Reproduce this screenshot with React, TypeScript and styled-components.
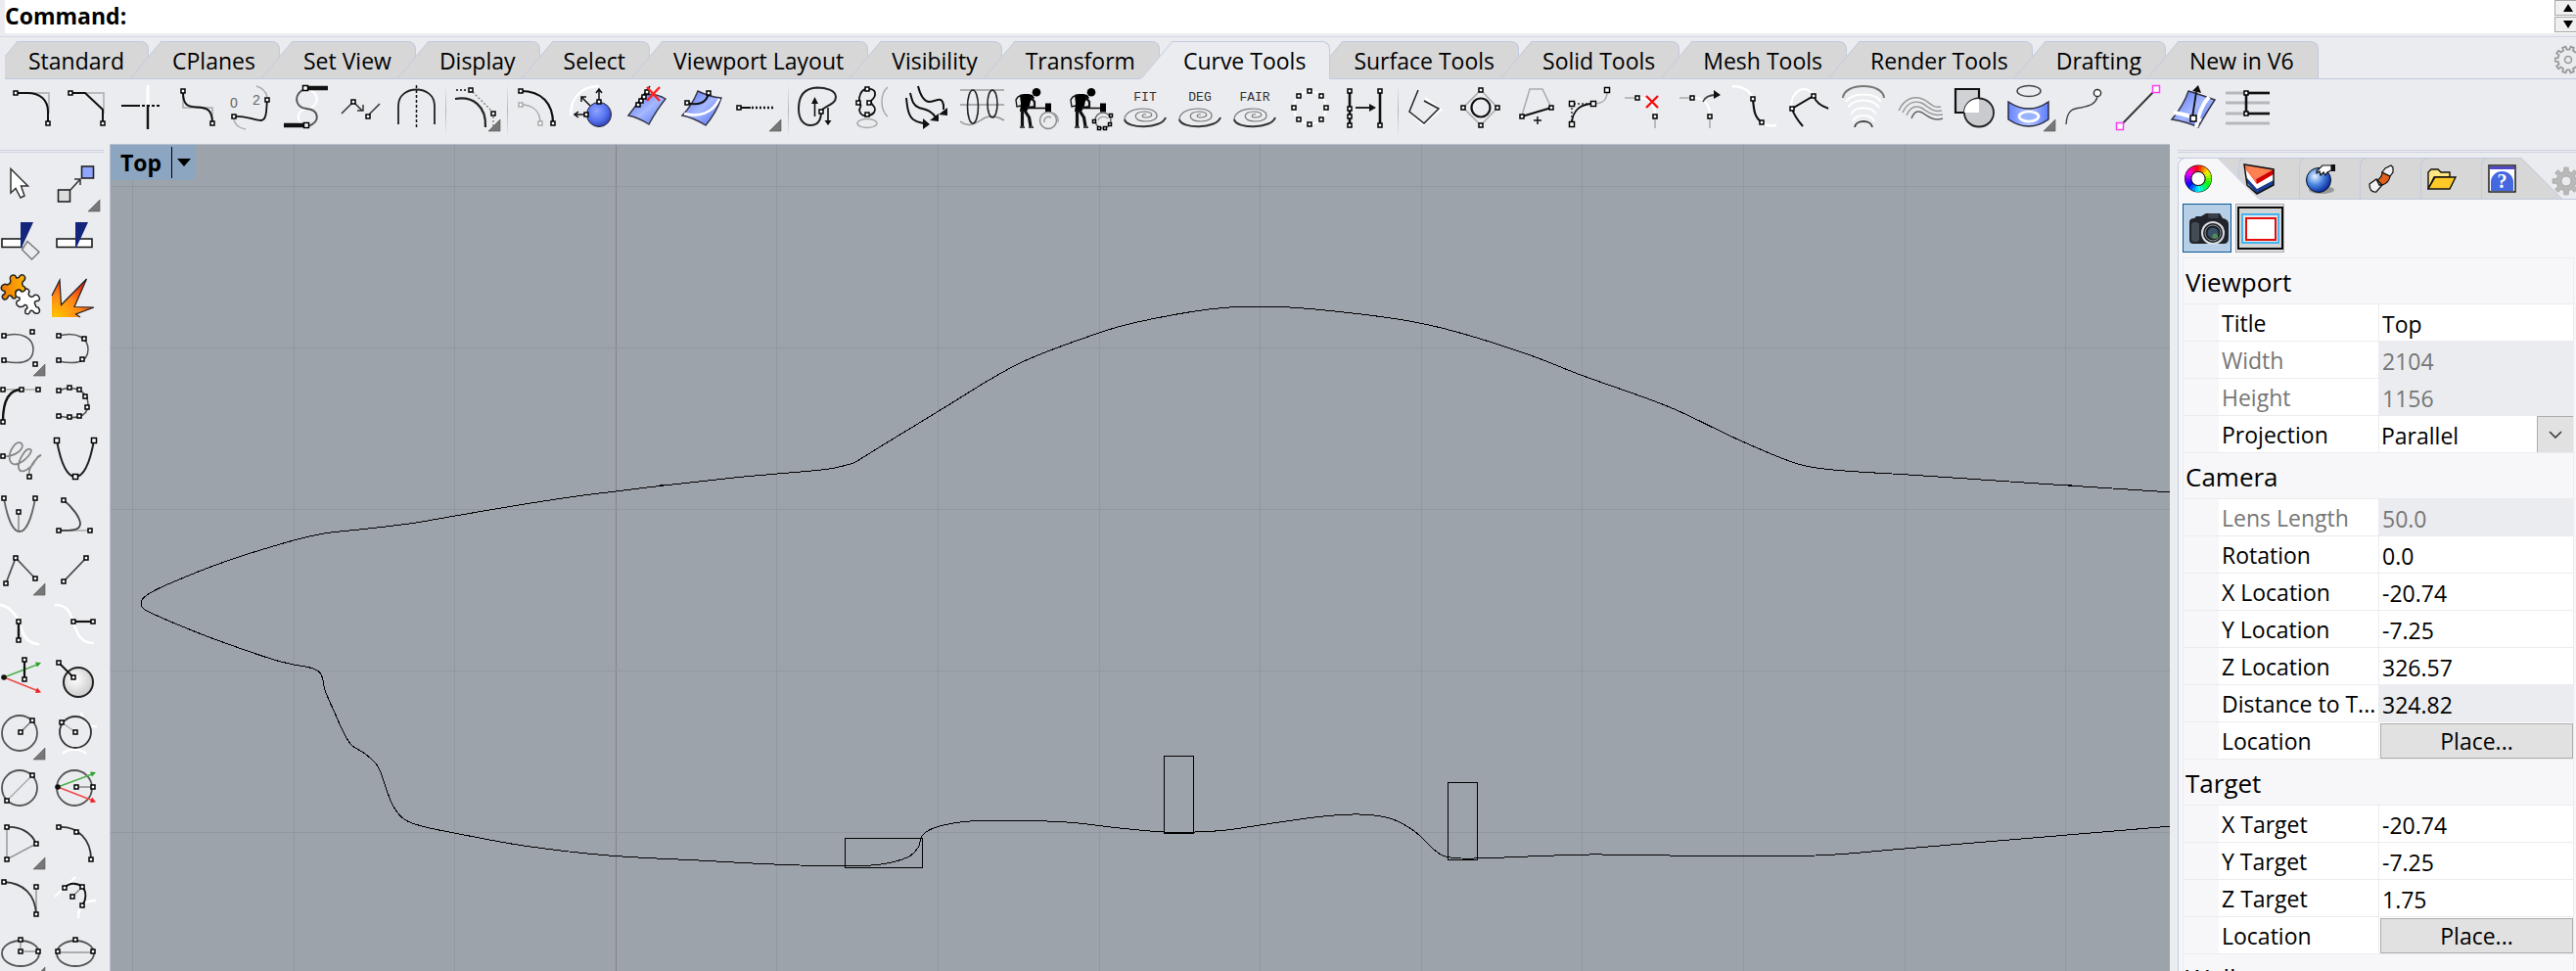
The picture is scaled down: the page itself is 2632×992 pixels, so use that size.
import React from "react";
import styled, { createGlobalStyle, css } from "styled-components";

const color = {
  chrome: "#ebecf0",
  line: "#c2cade",
  tab: "#d7d7d7",
  panel: "#f7f7f9",
  button: "#e1e1e1",
  buttonLine: "#adadad",
  canvas: "#9da3ab",
  grid: "#9298a0",
  axis: "#81858d",
};

const GlobalStyle = createGlobalStyle`
  *, *::before, *::after { box-sizing: border-box; }
  body {
    margin: 0;
    background: ${color.chrome};
    color: #000;
    font-family: "Open Sans", "Noto Sans", sans-serif;
    font-size: 23px;
    line-height: 30px;
  }
  button, input, select { font: inherit; color: inherit; margin: 0; padding: 0; border: 0; background: none; border-radius: 0; }
`;

/* ---------- shell ---------- */

const Shell = styled.div`
  display: flex;
  flex-direction: column;
  height: 100vh;
  overflow: hidden;
`;

const CommandBar = styled.div`
  display: flex;
  height: 34px;
  margin-left: 5px;
  background: #fff;
`;

const CommandLabel = styled.label`
  padding-top: 1px;
  font-weight: 700;
`;

const CommandInput = styled.input`
  flex: 1;
  min-width: 0;
  outline: none;
`;

const Spinner = styled.div`
  display: flex;
  flex-direction: column;
  gap: 1px;
  width: 22px;
`;

const SpinButton = styled.button`
  display: flex;
  align-items: center;
  justify-content: center;
  height: 16px;
  padding-left: 5px;
  border: 1px solid #a8a8a8;
  border-right: 0;
  background: #f0f0f0;
`;

const TabBar = styled.div`
  display: flex;
  justify-content: space-between;
  margin-top: 3px;
  padding: 4px 0 0 5px;
  border-top: 1px solid #d4d8e4;
`;

const Tabs = styled.div`
  display: flex;
  flex: 1;
  min-width: 0;
  height: 39px;
  overflow: hidden;
  box-shadow: inset 0 -1px 0 ${color.line};
`;

const Tab = styled.button<{ $active?: boolean }>`
  position: relative;
  flex: none;
  height: 39px;
  padding: 0 25px 0 24px;
  z-index: ${(p) => (p.$active ? 2 : 1)};
  white-space: nowrap;

  &::before,
  &::after {
    content: "";
    position: absolute;
    z-index: -1;
    top: 0;
    bottom: 0;
    background: ${(p) => (p.$active ? color.chrome : color.tab)};
    border: 1px solid ${color.line};
    border-bottom-color: ${(p) => (p.$active ? color.chrome : color.line)};
  }
  &::before {
    left: -20px;
    width: 44px;
    border-right: 0;
    transform: skewX(-40deg);
    transform-origin: bottom;
  }
  &::after {
    left: 22px;
    right: 0;
    border-left: 0;
    border-top-right-radius: 8px;
  }
`;

const GearSlot = styled.button`
  width: 22px;
  height: 39px;
  overflow: hidden;
  box-shadow: inset 0 -1px 0 ${color.line};
`;

const Toolbar = styled.div`
  display: flex;
  height: 66px;
  padding: 5px 0 0 4px;
`;

const Tool = styled.button`
  flex: none;
  width: 56px;
  height: 48px;
  padding: 0 4px;
`;

const Divider = styled.span`
  flex: none;
  width: 1px;
  height: 54px;
  margin: 0 3px;
  background: linear-gradient(${color.chrome}, #b4b6bc, ${color.chrome});
`;

const Glyph = styled.svg`
  display: block;
  overflow: visible;
`;

const Main = styled.main`
  display: flex;
  flex: 1;
  min-height: 0;
`;

/* ---------- palette ---------- */

const Palette = styled.aside`
  flex: none;
  width: 112px;
  overflow: hidden;
`;

const Grip = styled.div`
  height: 3px;
  margin-top: 6px;
  border: solid #cdd3e0;
  border-width: 1px 0;
`;

const PaletteGrip = styled(Grip)`
  width: 106px;
`;

const PaletteGrid = styled.div`
  display: grid;
  grid-template-columns: 48px 48px;
  gap: 8px;
  margin: 12px 0 0 -2px;
`;

const PaletteTool = styled.button`
  width: 48px;
  height: 48px;
`;

/* ---------- drawing area ---------- */

const Viewport = styled.section`
  position: relative;
  flex: 1;
  min-width: 0;
  overflow: hidden;
  border: solid #b9bfce;
  border-width: 1px 0 0 1px;
  background: ${color.canvas};
`;

const Canvas = styled.svg`
  display: block;
  width: 100%;
  height: 100%;
`;

const ViewportTitle = styled.button`
  position: absolute;
  top: 0;
  left: 0;
  display: flex;
  align-items: center;
  gap: 10px;
  height: 36px;
  padding: 0 5px 0 10px;
  border-radius: 0 0 5px 0;
  background: #8ca5c1;
  font-weight: 700;
`;

const TitleRule = styled.span`
  width: 1px;
  height: 32px;
  margin-right: -5px;
  background: #000;
`;

/* ---------- properties ---------- */

const Panel = styled.aside`
  display: flex;
  flex-direction: column;
  flex: none;
  width: 407px;
  margin-left: 8px;
  overflow: hidden;
`;

const PanelTabs = styled.div`
  position: relative;
  display: flex;
  flex: none;
  height: 43px;
  margin-top: 5px;
  overflow: hidden;
  box-shadow: inset 0 -1px 0 ${color.line};
`;

const PanelTab = styled.button<{ $active?: boolean }>`
  position: relative;
  flex: none;
  width: 62px;
  height: 43px;
  padding: 0 0 0 5px;
  z-index: ${(p) => (p.$active ? 2 : 1)};

  &::before,
  &::after {
    content: "";
    position: absolute;
    z-index: -1;
    top: 0;
    bottom: 0;
    background: ${(p) => (p.$active ? color.panel : color.tab)};
    border: 1px solid ${color.line};
    border-bottom-color: ${(p) => (p.$active ? color.panel : color.line)};
  }
  &::before {
    left: 20px;
    width: 64px;
    border-left: 0;
    transform: skewX(45deg);
    transform-origin: bottom;
  }
  &::after {
    left: 0;
    width: 24px;
    border-right: 0;
    border-top-left-radius: 8px;
  }
`;

const PanelGear = styled.button`
  position: relative;
  z-index: 3;
  flex: none;
  width: 40px;
  padding-left: 8px;
`;

const PanelBody = styled.div`
  flex: 1;
  min-height: 0;
  padding: 4px 2px 0 4px;
  overflow: hidden;
  border-left: 1px solid ${color.line};
  background: ${color.panel};
`;

const PageButtons = styled.div`
  display: flex;
  gap: 4px;
  margin-bottom: 5px;
`;

const PageButton = styled.button<{ $active?: boolean }>`
  width: 50px;
  height: 50px;
  border: 1px solid ${(p) => (p.$active ? "#0a5796" : "#adadad")};
  background: ${(p) => (p.$active ? "#b6cfe7" : "#dedfe0")};
`;

const Sheet = styled.form`
  border: solid ${color.chrome};
  border-width: 1px 1px 0;
`;

const Heading = styled.h2`
  height: 47px;
  margin: 0;
  padding: 4px 2px 0;
  border-bottom: 1px solid ${color.chrome};
  font-size: 26px;
  font-weight: 400;
  line-height: 40px;
`;

const Row = styled.div`
  display: grid;
  grid-template-columns: 36px 164px 1fr;
  height: 38px;
`;

const cell = css`
  min-width: 0;
  border-bottom: 1px solid ${color.chrome};
  background: #fff;
`;

const Gutter = styled.span`
  ${cell}
  background: ${color.panel};
`;

const Label = styled.label<{ $dim?: boolean }>`
  ${cell}
  padding: 4px 0 0 3px;
  border-right: 1px solid ${color.chrome};
  overflow: hidden;
  color: ${(p) => (p.$dim ? "#767676" : "#000")};
  text-overflow: ellipsis;
  white-space: nowrap;
`;

const Value = styled.input<{ $dim?: boolean }>`
  ${cell}
  width: 100%;
  height: 38px;
  padding: 2px 0 0 3px;
  outline: none;
  color: ${(p) => (p.$dim ? "#767676" : "#000")};
  &:read-only { background: ${color.chrome}; }
`;

const SelectCell = styled.div`
  ${cell}
  display: grid;
  grid-template-columns: 1fr 37px;
`;

const Select = styled.select`
  grid-area: 1 / 1 / 2 / 3;
  height: 37px;
  padding: 2px 37px 0 2px;
  appearance: none;
  outline: none;
`;

const Chevron = styled.span`
  display: flex;
  grid-area: 1 / 2;
  align-items: center;
  justify-content: center;
  border: solid ${color.buttonLine};
  border-width: 1px 0 0 1px;
  background: ${color.button};
  pointer-events: none;
`;

const ButtonCell = styled.div`
  ${cell}
  padding: 1px 0 0 1px;
`;

const PlaceButton = styled.button`
  display: block;
  width: 100%;
  height: 36px;
  border: 1px solid ${color.buttonLine};
  background: ${color.button};
`;

/* ---------- icon parts ---------- */

type Pt = [number, number];

const Nodes = ({ at, c = "#000", s = 4 }: { at: Pt[]; c?: string; s?: number }) => (
  <>
    {at.map(([x, y]) => (
      <rect key={`${x},${y}`} x={x - s / 2} y={y - s / 2} width={s} height={s} fill="#fff" stroke={c} strokeWidth={1.5} />
    ))}
  </>
);

const P = ({ d, c = "#111", w = 1.5, f = "none", dash }: { d: string; c?: string; w?: number; f?: string; dash?: string }) => (
  <path d={d} stroke={c} strokeWidth={w} fill={f} strokeDasharray={dash} />
);

const Flyout = () => <path d="M48 36V48H36Z" fill="#777" stroke="#555" strokeWidth={0.6} />;

const Head = ({ d, c = "#111" }: { d: string; c?: string }) => <path d={d} fill={c} />;

const Spiral = ({ word }: { word: string }) => (
  <>
    <text x={21} y={17} textAnchor="middle" fontFamily="Liberation Mono, monospace" fontSize={13} fill="#333">
      {word}
    </text>
    <P c="#777" w={1.2} d="M22 31C18 30 16 34 22 34C30 34 30 28 20 28C8 28 8 38 22 38C38 38 36 25 20 25C4 25 0 32 0 36" />
    <P c="#333" w={2} d="M0 36C2 46 38 46 42 34" />
  </>
);

const Painter = ({ points }: { points?: boolean }) => (
  <>
    <circle cx={22} cy={8.3} r={4.3} />
    <path d="M5 11L9 10H14L18 11L20 14L16 17L15 22L13 26L12 28H5L6 20Z" />
    <P w={1.4} d="M7 11L3 13L1 16L2 23L6 22" />
    <P w={2.2} d="M16 13L20 18V23L12 24" />
    <P w={1.6} d="M11 24.500H32" />
    <P w={3.2} d="M7.500 26V43M10 27L14.500 34L16 43" />
    <P w={1.4} d="M5 44H10M14 44H19" />
    <rect x={31} y={19.5} width={6} height={9} />
    {points ? (
      <>
        <circle cx={34} cy={37} r={8} fill="none" stroke="#666" strokeWidth={1.4} />
        <P c="#999" w={1.2} d="M29 37C30 33 36 32 39 35" />
        <Nodes s={3} at={[[25, 38], [42, 32], [41, 41], [30, 45], [36, 45]]} />
      </>
    ) : (
      <>
        <circle cx={34} cy={37} r={8.5} fill="none" stroke="#888" strokeWidth={1.4} />
        <P c="#999" w={1.4} d="M37 29C42 30 45 34 44 39M30 39C29 35 33 32 37 34" />
      </>
    )}
  </>
);

const TriadArrows = ({ x, y }: { x: number; y: number }) => (
  <>
    <P c="#4cb04c" d={`M${x} ${y}L40 7`} />
    <Head c="#2ca02c" d="M44 5L38 4.5L40 9.5Z" />
    <P c="#f04848" d={`M${x} ${y}L40 33.5`} />
    <Head c="#f02020" d="M44 35.5L38 36L40 30.5Z" />
    <circle cx={x} cy={y} r={2.8} fill="#111" />
  </>
);

const cog = (cx: number, cy: number, outer: number, inner: number, teeth: number) => {
  const step = (Math.PI * 2) / teeth;
  const spot = (r: number, a: number) => `${(cx + r * Math.cos(a)).toFixed(2)} ${(cy + r * Math.sin(a)).toFixed(2)}`;
  return (
    Array.from({ length: teeth }, (_, i) => {
      const a = i * step;
      return `${i ? "L" : "M"}${spot(inner, a - step * 0.28)}L${spot(outer, a - step * 0.2)}L${spot(outer, a + step * 0.2)}L${spot(inner, a + step * 0.28)}`;
    }).join("") + "Z"
  );
};

/* ---------- toolbar icons ---------- */

type Icon = { name: string; art: React.ReactNode };

const curveTools: Icon[][] = [
  [
    { name: "Fillet curves", art: (<><P c="#aaa" d="M8 9H42V30" /><P w={2} d="M8 9H20C33 9 41 16 41 28V40" /><Nodes at={[[8, 9], [41, 40]]} /></>) },
    { name: "Chamfer curves", art: (<><P c="#aaa" d="M8 9H42V30" /><P w={2} d="M8 9H23L41 26V40" /><Nodes at={[[8, 9], [41, 40]]} /></>) },
    { name: "Connect curves", art: (<><P c="#fff" w={3} d="M31 1V20" /><P w={2} d="M4 22H20" /><P w={2} dash="3 2" d="M20 22H44" /><P w={2.4} d="M31 21V46" /></>) },
    { name: "Blend curves", art: (<><P c="#aaa" d="M11 10V24H41V36" /><P w={2} d="M11 8C11 22 16 23 25 23.500C36 24 41 26 41 40" /><Nodes at={[[11, 7], [41, 40]]} /></>) },
    {
      name: "Blend curves with options",
      art: (
        <>
          <P c="#aaa" d="M30 2C37 4 40 9 41 13M7 36C8 42 13 45 19 46" />
          <P w={1.8} d="M7 33C20 32 28 37 35 37C41 36 40 25 41 16" />
          <text x={3} y={24} fontFamily="Liberation Sans, sans-serif" fontSize={14} fill="#666">0</text>
          <text x={26} y={21} fontFamily="Liberation Sans, sans-serif" fontSize={14} fill="#666">2</text>
          <Nodes at={[[7, 33], [41, 16]]} />
        </>
      ),
    },
    { name: "Arc blend", art: (<><P c="#fff" w={2} d="M26 5C40 8 38 24 26 25S14 40 25 43" /><P c="#555" w={2} d="M24 5C12 8 12 24 25 25S40 38 27 43" /><P w={4.500} d="M26 4H47M2 42H24" /><Nodes s={5} at={[[24, 4], [25, 42]]} /></>) },
    { name: "Match curve", art: (<><P c="#333" d="M5 30L17 18L26 27M32 32L44 20M21 27H27V21" /><Nodes at={[[17, 18], [32, 33]]} /></>) },
    { name: "Symmetry", art: (<><P c="#222" w={1.800} d="M7 41V22C7 0 44 0 44 22V41" /><P dash="3 2" d="M25.500 1V46" /></>) },
  ],
  [
    { name: "Extend curve", art: (<><P dash="2 2" d="M3 6H14" /><P c="#888" dash="2 2" d="M20 8L40 28M41 33V46" /><P c="#222" w={2.200} d="M2 15C20 12 34 22 33 44" /><Nodes at={[[18, 6], [41, 30]]} /><Flyout /></>) },
  ],
  [
    { name: "Offset curve", art: (<><P c="#aaa" d="M6 21C19 21 26 28 26 40" /><P w={2.200} d="M6 7C28 7 39 20 39 40" /><Nodes c="#aaa" at={[[6, 21], [26, 40]]} /><Nodes at={[[6, 7], [39, 40]]} /></>) },
    {
      name: "Offset on surface",
      art: (<><P c="#fff" w={2.400} d="M1 32C1 12 14 2 30 2" /><circle cx={30} cy={31} r={12.500} fill="url(#ball)" stroke="#223" /><P d="M30 16V6M27 9L30 5L33 9M15 31H5M9 28L5 31L9 34M21 22L12 13M12 18V13H17" /><Nodes at={[[30, 18], [17, 31]]} /></>),
    },
    {
      name: "Delete offset",
      art: (<><path d="M4 32L19 12Q30 8 42 15Q33 26 25 41Q14 34 4 32Z" fill="url(#sheet)" stroke="#334" strokeWidth={1.400} /><P d="M12 22L26 2" /><Nodes at={[[14, 21], [17, 17], [20, 13], [23, 8]]} /><P c="#f22" w={2.400} d="M23 3L36 17M36 3L23 17" /></>),
    },
    {
      name: "Blend on surface",
      art: (<><path d="M19 7Q31 13 43 14Q38 29 27 42Q14 34 3 32Q13 22 19 7Z" fill="url(#sheet)" stroke="#334" strokeWidth={1.400} /><P c="#fff" w={2.600} d="M5 30C20 34 34 30 41 15" /><P d="M8 19C18 22 28 20 30 9" w={2} /><Nodes at={[[30, 9], [8, 19]]} /></>),
    },
    { name: "Extend", art: (<><P w={2} d="M5 24H17" /><P w={2.600} dash="2 2" d="M18 24H40" /><Nodes at={[[5, 24]]} /><Flyout /></>) },
  ],
  [
    {
      name: "Adjust seam",
      art: (<><P c="#222" w={2} d="M26 28C27 22 41 22 41 13C41 6 30 3.500 22 3.500C9 4 3 12 3 25C3 36 8 42 15 42C24 42 26 35 26 28" /><P w={1.600} d="M19.500 33V17M33 24V38" /><Head d="M19.500 13L16 20H23ZM33 42L29.500 37H36.500Z" /><Nodes at={[[26, 28]]} /></>),
    },
    {
      name: "Edit curve on surface",
      art: (<><P c="#aaa" d="M38 3C30 10 30 26 38 33" /><ellipse cx={17} cy={40} rx={10} ry={4.500} fill="none" stroke="#aaa" strokeWidth={1.500} /><P w={1.800} d="M17 5C27 4 27 12 21 17C20 22 28 22 24 29C19 34 10 34 9 26C13 20 8 20 9 14C10 8 13 5 17 5Z" /><Nodes at={[[17, 5], [8, 19], [19, 19], [17, 31]]} /></>),
    },
    {
      name: "Curve direction",
      art: (<><P w={2} d="M13 2C15 10 18 17 24 18C30 18 36 13 38 18C40 22 39 24 39 26M5 9C7 17 8 22 14 24C20 26 26 26 31 34M1 14C2 24 3 32 8 36C12 39 15 39 19 40" /><Head d="M43 24V32L34 31ZM34 30V38L25 37ZM18 35L25 41L18 46Z" /></>),
    },
    {
      name: "Cross sections",
      art: (<><P c="#999" d="M0 6H45M0 21H45M0 38C10 46 18 38 26 34C34 31 40 34 45 37" /><ellipse cx={13} cy={23} rx={5.500} ry={17} fill="none" stroke="#222" strokeWidth={1.600} /><ellipse cx={33} cy={20} rx={5} ry={14} fill="none" stroke="#222" strokeWidth={1.600} /></>),
    },
    { name: "Rebuild curve", art: <Painter /> },
    { name: "Rebuild with points", art: <Painter points /> },
    { name: "Fit curve", art: <Spiral word="FIT" /> },
    { name: "Change degree", art: <Spiral word="DEG" /> },
    { name: "Fair curve", art: <Spiral word="FAIR" /> },
    { name: "Make periodic", art: (<><circle cx={21.500} cy={24} r={16.500} fill="none" stroke="#fff" strokeWidth={2} /><Nodes at={[[21, 7], [33, 12], [38, 24], [33, 36], [21, 41], [10, 36], [5, 24], [10, 12]]} /></>) },
    { name: "Match structure", art: (<><P w={2.600} d="M6 7V42M37 7V42" /><P w={1.800} d="M12 24H28" /><Head d="M33 24L26 20V28Z" /><Nodes at={[[6, 7], [6, 25], [6, 33], [6, 42], [37, 7], [37, 42]]} /></>) },
  ],
  [
    { name: "Close curve", art: (<><P c="#fff" w={2.500} d="M18 41L36 26L20 14M5 29L19 42" /><P c="#222" d="M13 6L4 28L19 40L34 25L19 17" /></>) },
    { name: "Convert curve", art: (<><P c="#aaa" d="M21 6L3 24L21 42L38 24Z" /><circle cx={21} cy={24} r={9.500} fill="none" stroke="#111" strokeWidth={2.200} /><Nodes at={[[21, 6], [3, 24], [38, 24], [21, 42]]} /></>) },
    { name: "Insert line", art: (<><P c="#aaa" d="M7 32L15 5H28L37 24" /><P w={2} d="M7 33L37 24" /><P d="M23 33V41M19 37H27" /><Nodes at={[[7, 33], [37, 24]]} /></>) },
    { name: "Edit Bezier", art: (<><P c="#333" dash="2 2" d="M2 38V20H22" /><P w={1.800} d="M2 41C2 26 12 20 24 20" /><P c="#aaa" d="M26 20C36 19 38 14 38 8" /><Nodes s={5} at={[[2, 20], [24, 20], [38, 6], [2, 41]]} /></>) },
    { name: "Remove corner", art: (<><P c="#aaa" d="M0 14H12M31 34V45" /><P c="#fff" w={2.200} d="M15 14C26 14 31 22 31 31" /><Nodes at={[[13, 14], [31, 33]]} /><P c="#e11" w={2.400} d="M22 12L34 24M34 12L22 24" /></>) },
    { name: "Replace corner", art: (<><P c="#aaa" d="M0 14H12M31 34V45" /><P c="#fff" w={2.200} d="M15 14C26 14 31 22 31 31" /><P c="#444" w={1.800} d="M24 18C26 13 31 11 37 11" /><Head d="M42 11L35 6V15Z" /><Nodes at={[[13, 14], [31, 33]]} /></>) },
    { name: "Sub curve", art: (<><P c="#fff" w={2.600} d="M-2 2C10 2 17 8 19 15M28 39C32 42 38 43 43 42" /><P w={2.200} d="M19 15C20 28 21 34 28 39" /><Nodes at={[[19, 15], [28, 39]]} /></>) },
    { name: "Curve through polyline", art: (<><P c="#fff" w={2.200} d="M2 24C2 6 16 0 24 10" /><P w={2} d="M14 43C8 36 5 32 3 25L25 12C28 20 34 22 40 25" /><Nodes at={[[25, 12], [3, 25]]} /></>) },
    { name: "Tween curves", art: (<><P c="#fff" w={1.800} d="M2 18C8 8 32 8 38 18M4 24C10 14 30 14 36 24M7 31C11 22 29 22 33 31M9 38C13 30 27 30 31 38" /><P c="#777" w={2} d="M-1 14C0 -2 40 -2 41 14" /><P c="#444" w={1.800} d="M11 44C12 36 28 36 29 44" /></>) },
    { name: "Average curves", art: (<><P c="#999" d="M0 27C6 14 16 12 24 15C32 18 34 25 43 23M4 29C9 18 17 17 23 19C31 23 34 29 44 27M8 32C12 22 18 22 23 24C30 28 34 33 45 31" /><P c="#666" d="M13 35C16 27 20 27 24 29C30 33 36 38 45 35" /></>) },
    { name: "Curve boolean", art: (<><path d="M2 5H26V29H2Z" fill="#d0d2d6" stroke="#111" strokeWidth={2.200} /><ellipse cx={26} cy={29} rx={15} ry={14.500} fill="#c9cbcf" stroke="#222" strokeWidth={1.800} /><path d="M26 15V29H11C11 21 17 15 26 15Z" fill="#fff" /></>) },
    {
      name: "Project curve",
      art: (<><ellipse cx={21} cy={7} rx={12} ry={5.500} fill="none" stroke="#444" strokeWidth={1.500} /><path d="M0 18Q21 32 41 18V36Q21 50 0 36Z" fill="url(#tube)" stroke="#223" strokeWidth={1.400} /><ellipse cx={21} cy={33} rx={10} ry={5} fill="#9bb4ff" stroke="#fff" strokeWidth={2.600} /><Flyout /></>),
    },
    { name: "Extract curve", art: (<><P c="#444" w={1.400} d="M3 41C4 26 10 25 18 24C28 22 33 20 35 13" /><circle cx={35} cy={9} r={3.600} fill="#fff" stroke="#333" strokeWidth={1.500} /></>) },
    { name: "Handle curve", art: (<><P c="#333" w={1.800} d="M39 5L2 43" /><Nodes c="#ff3df2" s={7} at={[[39, 5], [2, 43]]} /></>) },
    {
      name: "Curve on surface",
      art: (<><path d="M16 7Q29 11 43 16Q35 28 26 44Q13 38 -1 36Q11 22 16 7Z" fill="url(#sheet)" stroke="#334" strokeWidth={1.400} /><P c="#fff" w={4} d="M1 29Q15 31 29 37M37 13Q27 24 24 44" /><P w={1.800} d="M20 34L24 8" /><Head d="M26 1L29 9L20 7Z" /><Nodes s={6} at={[[21, 35]]} /></>),
    },
    { name: "Connect levels", art: (<><P c="#b5b7bb" w={3} d="M-2 9H43M-2 19H43M-2 30H43M-2 40H43" /><P w={2.600} d="M19 9H43M19 30H43M19 9V30" /><Nodes at={[[19, 9], [19, 30]]} /></>) },
  ],
];

/* ---------- palette icons ---------- */

const paletteTools: Icon[] = [
  { name: "Select", art: <path d="M13 4.500V29L18 24.500L23 34L27 32L23.500 22H30.500Z" fill="#fff" stroke="#333" strokeWidth={1.500} /> },
  {
    name: "Transform",
    art: (<><rect x={5.500} y={26} width={12} height={12} fill="#ddd" stroke="#222" strokeWidth={1.600} /><rect x={29.500} y={2} width={12} height={12} fill="#8fa5ff" stroke="#222" strokeWidth={1.600} /><P c="#333" d="M18 26L28 15M22 15H28V21" /><Flyout /></>),
  },
  { name: "Trim", art: (<><path d="M4 20H24V28.500H4Z" fill="#fff" stroke="#111" strokeWidth={1.500} /><path d="M23 3H36L24 29H23Z" fill="#14267c" /><path d="M30 22.500L42 33.500L34.500 41L24.500 31Z" fill="none" stroke="#777" strokeWidth={1.400} /></>) },
  { name: "Split", art: (<><path d="M4 20H40V28.500H4Z" fill="#fff" stroke="#111" strokeWidth={1.500} /><path d="M23 3H36L24 29H23Z" fill="#14267c" /></>) },
  {
    name: "Join",
    art: (
      <g stroke="#222" strokeWidth={1.500} strokeLinejoin="round">
        <path d="M4 12Q7 9 9 11Q13 10 12.700 7Q11 1 16 1Q18 1 18.700 4Q22 4 22 2Q26 -1 27.700 3.500Q28 6 25 8Q24 12 27 13Q30 17 27 18.500Q24 18 22 16Q18 16 18 18.500Q19 24 17 25Q14 25 14 22.500Q10 21 10 24Q7 28 4.700 24.500Q3 22 7 20Q8 17 5 17Q2 15 4 12Z" fill="url(#amber)" />
        <path d="M18 18.500Q21 14 24 18Q27 18 28 15.500Q31 14 32 18Q30 21 33 23Q36 24 37 21.500Q41 20 42.500 25Q42 28 39 27.500Q36 29 38.500 32Q38 34 41 34Q44 38 41 40Q37 41 36 38Q33 36 32.500 39Q31 42 28 40Q27 36 30 35Q30 31 27 31.500Q26 34 22 33.500Q17 31 19.500 27.500Q23 27 22 24Q17 24 18 18.500Z" fill="#fff" />
      </g>
    ),
  },
  { name: "Explode", art: (<><path d="M-1 22L7 6L8.500 31.500L34.500 5L22 33.500L42 34L23.500 41L28 44H-1Z" fill="url(#fire)" /><P c="#222" w={1.200} d="M-1 22L7 6L8.500 31.500L34.500 5L22 33.500L42 34L23.500 41L28 44" /></>) },
  { name: "Control point curve", art: (<><P c="#555" d="M6 7C25 2 36 10 36 21C36 36 20 36 6 33" /><Nodes at={[[6, 7], [35, 3], [6, 32], [38, 36]]} /><Flyout /></>) },
  { name: "Interpolated curve", art: (<><P c="#555" d="M6 7C25 2 36 10 36 21C36 36 20 36 6 33" /><Nodes at={[[6, 7], [32, 10], [30, 31], [6, 32]]} /></>) },
  { name: "Handle curve", art: (<><P c="#aaa" d="M5 6H41" /><P w={2.400} d="M24 6C12 6 5 16 5 38" /><Nodes at={[[5, 6], [24, 6], [41, 6], [5, 39]]} /></>) },
  { name: "Sketch points", art: (<><P c="#555" d="M6 7C25 0 36 10 36 21C36 36 20 36 6 33" /><Nodes at={[[6, 7], [17, 4], [27, 6], [33, 13], [35, 24], [27, 33], [17, 34], [6, 33]]} /></>) },
  { name: "Helix", art: (<><P c="#888" w={1.800} d="M5 18C18 19 28 10 24 5C18 1 10 14 12 22C16 34 34 18 34 12C30 6 20 22 21 30C23 38 34 30 37 24C40 20 41 17 44 17C38 20 30 32 32 37" /><Nodes at={[[5, 18], [32, 39]]} /></>) },
  { name: "Conic", art: (<><P c="#222" w={2} d="M4 2C8 24 14 39 23 39S38 24 42 2" /><Nodes s={5} at={[[4, 2], [42, 2], [23, 39]]} /></>) },
  { name: "Parabola", art: (<><P c="#888" d="M21 18V39" /><P c="#666" w={1.800} d="M6 5C10 28 16 39 22 39S34 28 38 5" /><Nodes at={[[6, 5], [38, 5], [21, 19]]} /></>) },
  { name: "Conic through point", art: (<><P c="#aaa" d="M6 38H38" /><P c="#444" w={1.800} d="M11 7C20 14 28 25 28 31C28 38 20 38 6 38" /><Nodes at={[[11, 7], [6, 38], [38, 38]]} /></>) },
  { name: "Polyline", art: (<><P c="#555" w={1.800} d="M8 36L18 10L38 31" /><Nodes at={[[18, 10], [8, 36], [38, 31]]} /><Flyout /></>) },
  { name: "Line", art: (<><P c="#444" w={1.800} d="M34 10L11 34" /><Nodes at={[[34, 10], [11, 34]]} /></>) },
  { name: "Line from curve", art: (<><P c="#fff" w={2.600} d="M0 2C10 2 16 8 21 19C26 34 30 42 42 42" /><P w={2.400} d="M21 19V38" /><Nodes at={[[21, 19], [21, 38]]} /></>) },
  { name: "Line normal to curve", art: (<><P c="#fff" w={2.600} d="M2 2C14 2 17 8 21 19C25 34 30 41 42 41" /><P w={2.200} d="M21 19H41" /><Nodes at={[[21, 19], [41, 19]]} /></>) },
  { name: "Vertical line", art: (<><TriadArrows x={6} y={20} /><P w={2.200} d="M27 2V22" /><Nodes at={[[27, 2], [27, 22]]} /></>) },
  { name: "Line normal to surface", art: (<><circle cx={26} cy={25} r={15} fill="url(#pearl)" stroke="#222" strokeWidth={2} /><P w={1.800} d="M6 5L21 20" /><Nodes at={[[6, 5], [21, 20]]} /></>) },
  { name: "Circle", art: (<><circle cx={22} cy={21} r={18} fill="none" stroke="#555" strokeWidth={1.800} /><P c="#777" d="M23 20L35 8" /><Nodes at={[[35, 8], [23, 20]]} /><Flyout /></>) },
  { name: "Tangent circle", art: (<><P c="#fff" w={2.400} d="M29 0C31 8 36 15 45 14M10 42C16 36 28 36 34 42" /><circle cx={23} cy={20} r={16} fill="none" stroke="#333" strokeWidth={1.800} /><P c="#aaa" d="M9 10L23 20" /><Nodes at={[[9, 10], [23, 20]]} /></>) },
  { name: "Circle by diameter", art: (<><circle cx={22} cy={21} r={18} fill="none" stroke="#555" strokeWidth={1.800} /><P c="#aaa" d="M9 34L35 8" /><Nodes at={[[35, 8], [9, 34]]} /></>) },
  { name: "Vertical circle", art: (<><circle cx={22} cy={21} r={18} fill="none" stroke="#555" strokeWidth={1.800} /><TriadArrows x={5} y={20} /><P c="#888" d="M24 20H41" /><Nodes at={[[24, 20], [41, 20]]} /></>) },
  { name: "Arc", art: (<><P c="#999" d="M9 5V38L39 22" /><P c="#333" w={1.800} d="M9 5C22 4 34 10 39 22" /><Nodes at={[[9, 5], [39, 22], [9, 38]]} /><Flyout /></>) },
  { name: "Arc by three points", art: (<><P c="#333" w={1.800} d="M6 5C26 4 39 18 39 38" /><Nodes at={[[6, 5], [24, 10], [39, 38]]} /></>) },
  { name: "Arc by direction", art: (<><P c="#999" d="M39 10V38" /><P c="#333" w={1.800} d="M6 5C26 6 38 18 39 38" /><Nodes at={[[6, 5], [39, 10], [39, 38]]} /></>) },
  { name: "Tangent arc", art: (<><P c="#fff" w={2.400} d="M2 20L23 0M26 42C26 30 32 24 44 24" /><P c="#888" d="M20 20L30 10" /><P w={1.800} d="M12 11C17 5 25 6 30 10C35 15 34 24 30 29" /><Nodes at={[[12, 11], [30, 10], [20, 20], [30, 29]]} /></>) },
  { name: "Ellipse", art: (<><ellipse cx={23} cy={22} rx={19} ry={13} fill="none" stroke="#555" strokeWidth={1.800} /><P c="#999" d="M23 8V20H41" /><Nodes at={[[23, 8], [23, 20], [41, 20]]} /><Flyout /></>) },
  { name: "Ellipse by diameter", art: (<><ellipse cx={23} cy={22} rx={19} ry={13} fill="none" stroke="#555" strokeWidth={1.800} /><P c="#999" d="M5 21H41" /><Nodes at={[[23, 8], [5, 20], [41, 20]]} /></>) },
];

/* ---------- panel icons ---------- */

const hueRing = Array.from({ length: 24 }, (_, i) => {
  const a = ((i * 15 - 90) * Math.PI) / 180;
  const b = ((i * 15 - 74) * Math.PI) / 180;
  const at = (t: number) => `${(16 + 10.5 * Math.cos(t)).toFixed(2)} ${(15.5 + 10.5 * Math.sin(t)).toFixed(2)}`;
  return <path key={i} d={`M${at(a)}A10.5 10.5 0 0 1 ${at(b)}`} fill="none" stroke={`hsl(${(i * 15 + 10) % 360} 100% 50%)`} strokeWidth={6} />;
});

const panelPages: Icon[] = [
  { name: "Properties", art: (<><circle cx={16} cy={15.500} r={14} fill="#111" />{hueRing}<circle cx={16} cy={15.500} r={7} fill="#fff" stroke="#222" /></>) },
  {
    name: "Layers",
    art: (
      <>
        <path d="M1 1L31 6V22L14 31L4 22Z" fill="#fff" />
        <path d="M1 1L31 6L13 16Z" fill="#ff8050" />
        <path d="M13 16L31 6V11L14 21L3 6L1 1Z" fill="#d40000" />
        <path d="M1 1L13 16L14 20L3 7Z" fill="#ff8050" />
        <path d="M14 26L31 17V22L14 31L4 20L3 14Z" fill="#1c3f92" />
        <path d="M1 1L31 6V22L14 31L4 22Z" fill="none" stroke="#111" strokeWidth={1.500} />
      </>
    ),
  },
  {
    name: "Rendering",
    art: (
      <>
        <ellipse cx={18} cy={27} rx={13} ry={4} fill="#999" />
        <circle cx={15} cy={17} r={12.500} fill="url(#globe)" stroke="#012" />
        <path d="M13 8L19 2H28V7L24 9L22 12L20 9L17 12L16 8L13 10Z" fill="#fff" stroke="#111" strokeWidth={1.200} />
        <rect x={28} y={1} width={4} height={7} fill="#111" />
      </>
    ),
  },
  {
    name: "Materials",
    art: (
      <>
        <path d="M5 21L12 16L15 22L18 22L12 29Q5 30 5 21Z" fill="#f2f2f2" stroke="#111" strokeWidth={1.300} />
        <path d="M13 17Q18 14 18 9L26 13Q25 20 18 22Z" fill="#e0601c" stroke="#111" strokeWidth={1.200} />
        <path d="M18 9L21 5L27 2L29 4L29 9L26 13Z" fill="#eee" stroke="#111" strokeWidth={1.200} />
      </>
    ),
  },
  {
    name: "Libraries",
    art: (
      <>
        <path d="M3 26V9L6 6H13L16 9H25V14H9Z" fill="#ffe680" stroke="#111" strokeWidth={1.400} />
        <path d="M3 26L10 14H31L25 26Z" fill="#ffc928" stroke="#111" strokeWidth={1.400} />
      </>
    ),
  },
  {
    name: "Help",
    art: (
      <>
        <rect x={3} y={2} width={27} height={27} fill="#fff" stroke="#111" strokeWidth={1.400} />
        <rect x={4} y={3} width={25} height={3} fill="#5148c8" />
        <path d="M5 28V19A11.500 11 0 0 1 28 19V28Z" fill="#4468e0" />
        <text x={16.500} y={25} textAnchor="middle" fontFamily="Liberation Serif, serif" fontWeight={700} fontSize={20} fill="#fff">?</text>
      </>
    ),
  },
];

const CameraArt = () => (
  <>
    <path d="M6 18Q6 14 11 14L13 12H18L23 9H37L40 14Q46 15 46 20V34Q46 40 41 40H10Q6 40 6 36Z" fill="#20242a" />
    <rect x={25} y={9} width={11} height={5} rx={2} fill="#3a4048" />
    <rect x={8} y={18} width={8} height={20} rx={3} fill="#454b54" />
    <circle cx={30} cy={29} r={12} fill="#d8dce0" />
    <circle cx={30} cy={29} r={10} fill="#1b1f24" />
    <circle cx={30} cy={29} r={8} fill="none" stroke="#8b949c" />
    <circle cx={30} cy={29} r={5.500} fill="#38506a" />
    <path d="M30 30Q36 28 35 34Q32 36 29 34Z" fill="#4f8a54" />
  </>
);

const FrameArt = () => (
  <>
    <rect x={2} y={3} width={45} height={42} fill="#d2d4d5" stroke="#0a0a0a" strokeWidth={2} />
    <rect x={6} y={10} width={37} height={29} fill="#e4e6e8" stroke="#46b4f0" strokeWidth={2} />
    <rect x={10} y={14} width={30} height={22} fill="#fff" stroke="#e80c0c" strokeWidth={2} />
  </>
);

const Paints = () => (
  <svg width={0} height={0} style={{ position: "absolute" }} aria-hidden="true">
    <defs>
      <radialGradient id="ball" cx="0.4" cy="0.35" r="0.7"><stop offset="0" stopColor="#8ea4ff" /><stop offset="0.6" stopColor="#5570ee" /><stop offset="1" stopColor="#2a3ca8" /></radialGradient>
      <radialGradient id="globe" cx="0.35" cy="0.35" r="0.7"><stop offset="0" stopColor="#e6f2ff" /><stop offset="0.5" stopColor="#4a86e0" /><stop offset="1" stopColor="#08249c" /></radialGradient>
      <radialGradient id="pearl" cx="0.4" cy="0.4" r="0.7"><stop offset="0" stopColor="#fff" /><stop offset="1" stopColor="#c4c4c4" /></radialGradient>
      <linearGradient id="sheet" x1="0" y1="0" x2="1" y2="1"><stop offset="0" stopColor="#4f6df2" /><stop offset="0.5" stopColor="#a6b8ff" /><stop offset="1" stopColor="#4f6df2" /></linearGradient>
      <linearGradient id="tube"><stop offset="0" stopColor="#6583ff" /><stop offset="0.5" stopColor="#b4c4ff" /><stop offset="1" stopColor="#5c7bfa" /></linearGradient>
      <linearGradient id="amber"><stop offset="0" stopColor="#f07800" /><stop offset="1" stopColor="#ffb60a" /></linearGradient>
      <radialGradient id="fire" cx="0.1" cy="1" r="1"><stop offset="0" stopColor="#ffc400" /><stop offset="0.6" stopColor="#ff8418" /><stop offset="1" stopColor="#e83010" /></radialGradient>
    </defs>
  </svg>
);

/* ---------- model ---------- */

const profile: Pt[] = [
  [2106, 355], [2000, 348], [1955, 345], [1837, 337], [1760, 332], [1724, 326], [1665, 302], [1593, 268], [1502, 235],
  [1448, 214], [1375, 191], [1321, 179], [1231, 168], [1174, 165], [1122, 168], [1049, 181], [1010, 192], [927, 224],
  [846, 272], [787, 308], [766, 321], [759, 325], [734, 331], [681, 336], [637, 340], [565, 348], [516, 354], [476, 359],
  [423, 367], [352, 379], [305, 387], [254, 393], [218, 397], [187, 404], [119, 425], [63, 447], [37, 460], [31, 469],
  [37, 476], [93, 500], [137, 516], [167, 526], [187, 531], [207, 535], [215, 541], [219, 557], [228, 578], [238, 600],
  [246, 613], [260, 622], [273, 635], [282, 659], [289, 676], [300, 689], [318, 696], [351, 703], [422, 716], [509, 726],
  [601, 731], [678, 735], [750, 737], [787, 735], [814, 728], [825, 718], [829, 706], [841, 698], [868, 692], [904, 690],
  [977, 692], [1031, 698], [1076, 702], [1108, 702], [1140, 700], [1194, 692], [1239, 686], [1276, 684], [1307, 688],
  [1332, 701], [1359, 725], [1380, 729], [1448, 727], [1511, 725], [1593, 726], [1742, 726], [1833, 719], [2106, 696],
];

const blocks = [
  { x: 1076, y: 624, w: 30, h: 79 },
  { x: 1366, y: 651, w: 30, h: 79 },
  { x: 750, y: 708, w: 79, h: 30 },
];

/* Smooth curve through all points, handles scaled to the length of each span. */
const spline = (pts: Pt[]) => {
  const dist = (a: Pt, b: Pt) => Math.hypot(b[0] - a[0], b[1] - a[1]);
  const tangent = (i: number): Pt => {
    const a = pts[Math.max(i - 1, 0)];
    const b = pts[Math.min(i + 1, pts.length - 1)];
    const l = dist(a, b) || 1;
    return [(b[0] - a[0]) / l, (b[1] - a[1]) / l];
  };
  return pts
    .map((p, i) => {
      if (!i) return `M${p[0]} ${p[1]}`;
      const q = pts[i - 1];
      const k = dist(q, p) / 3;
      const [t, u] = [tangent(i - 1), tangent(i)];
      return `C${(q[0] + t[0] * k).toFixed(1)} ${(q[1] + t[1] * k).toFixed(1)} ${(p[0] - u[0] * k).toFixed(1)} ${(p[1] - u[1] * k).toFixed(1)} ${p[0]} ${p[1]}`;
    })
    .join("");
};

const Drawing = () => (
  <Canvas role="img" aria-label="Top view of the profile curve">
    <g shapeRendering="crispEdges" fill="none" stroke="#000">
      {Array.from({ length: 24 }, (_, i) => {
        const x = Math.round(22 + i * 164.6) + 0.5;
        return <line key={`v${i}`} x1={x} x2={x} y1={0} y2="100%" stroke={i === 3 ? color.axis : color.grid} />;
      })}
      {Array.from({ length: 12 }, (_, i) => {
        const y = 42.5 + i * 165;
        return <line key={`h${i}`} x1={0} x2="100%" y1={y} y2={y} stroke={color.grid} />;
      })}
      <path d={spline(profile)} />
      {blocks.map((b) => (
        <rect key={b.x} x={b.x + 0.5} y={b.y + 0.5} width={b.w} height={b.h} />
      ))}
      <path d="M561 347.500H570M1990 347.500H2004" />
    </g>
  </Canvas>
);

/* ---------- page ---------- */

const toolTabs = [
  "Standard", "CPlanes", "Set View", "Display", "Select", "Viewport Layout", "Visibility", "Transform", "Curve Tools",
  "Surface Tools", "Solid Tools", "Mesh Tools", "Render Tools", "Drafting", "New in V6",
];

type Field = { label: string; value: string; kind?: "dim" | "fixed" | "select" | "button" };

const sections: { title: string; fields: Field[] }[] = [
  {
    title: "Viewport",
    fields: [
      { label: "Title", value: "Top" },
      { label: "Width", value: "2104", kind: "dim" },
      { label: "Height", value: "1156", kind: "dim" },
      { label: "Projection", value: "Parallel", kind: "select" },
    ],
  },
  {
    title: "Camera",
    fields: [
      { label: "Lens Length", value: "50.0", kind: "dim" },
      { label: "Rotation", value: "0.0" },
      { label: "X Location", value: "-20.74" },
      { label: "Y Location", value: "-7.25" },
      { label: "Z Location", value: "326.57" },
      { label: "Distance to T...", value: "324.82", kind: "fixed" },
      { label: "Location", value: "Place...", kind: "button" },
    ],
  },
  {
    title: "Target",
    fields: [
      { label: "X Target", value: "-20.74" },
      { label: "Y Target", value: "-7.25" },
      { label: "Z Target", value: "1.75" },
      { label: "Location", value: "Place...", kind: "button" },
    ],
  },
  { title: "Wallpaper", fields: [] },
];

const Editor = ({ id, field }: { id: string; field: Field }) => {
  if (field.kind === "select")
    return (
      <SelectCell>
        <Select id={id} defaultValue={field.value}>
          <option>Parallel</option>
          <option>Perspective</option>
        </Select>
        <Chevron>
          <svg width={14} height={8} fill="none" stroke="#333" strokeWidth={1.500}><path d="M1 1L7 7L13 1" /></svg>
        </Chevron>
      </SelectCell>
    );
  if (field.kind === "button")
    return (
      <ButtonCell>
        <PlaceButton id={id} type="button">{field.value}</PlaceButton>
      </ButtonCell>
    );
  return <Value id={id} defaultValue={field.value} readOnly={!!field.kind} $dim={field.kind === "dim"} />;
};

export default function App() {
  return (
    <Shell>
      <GlobalStyle />
      <Paints />
      <CommandBar>
        <CommandLabel htmlFor="command">Command:</CommandLabel>
        <CommandInput id="command" />
        <Spinner>
          <SpinButton aria-label="Previous"><svg width={10} height={8}><path d="M0 8L5 0L10 8Z" /></svg></SpinButton>
          <SpinButton aria-label="Next"><svg width={10} height={8}><path d="M0 0L5 8L10 0Z" /></svg></SpinButton>
        </Spinner>
      </CommandBar>

      <TabBar>
        <Tabs role="tablist">
          {toolTabs.map((t) => (
            <Tab key={t} role="tab" aria-selected={t === "Curve Tools"} $active={t === "Curve Tools"}>{t}</Tab>
          ))}
        </Tabs>
        <GearSlot aria-label="Toolbar options">
          <Glyph width={32} height={36}>
            <path d={cog(14, 17, 13.5, 10.5, 10)} fill="none" stroke="#999" strokeWidth={1.800} />
            <circle cx={14} cy={17} r={3.500} fill="none" stroke="#999" strokeWidth={1.600} />
          </Glyph>
        </GearSlot>
      </TabBar>

      <Toolbar role="toolbar" aria-label="Curve Tools">
        {curveTools.map((group, g) => (
          <React.Fragment key={g}>
            {g > 0 && <Divider />}
            {group.map((tool) => (
              <Tool key={tool.name} aria-label={tool.name}>
                <Glyph width={48} height={48}>{tool.art}</Glyph>
              </Tool>
            ))}
          </React.Fragment>
        ))}
      </Toolbar>

      <Main>
        <Palette>
          <PaletteGrip />
          <PaletteGrid>
            {paletteTools.map((tool) => (
              <PaletteTool key={tool.name} aria-label={tool.name}>
                <Glyph width={48} height={48}>{tool.art}</Glyph>
              </PaletteTool>
            ))}
          </PaletteGrid>
        </Palette>

        <Viewport>
          <Drawing />
          <ViewportTitle>
            Top
            <TitleRule />
            <svg width={14} height={8}><path d="M0 0H14L7 8Z" /></svg>
          </ViewportTitle>
        </Viewport>

        <Panel>
          <Grip />
          <PanelTabs role="tablist">
            {panelPages.map((page, i) => (
              <PanelTab key={page.name} role="tab" aria-label={page.name} aria-selected={i === 0} $active={i === 0}>
                <Glyph width={32} height={32}>{page.art}</Glyph>
              </PanelTab>
            ))}
            <PanelGear aria-label="Panel options">
              <Glyph width={32} height={36}>
                <path fillRule="evenodd" d={`${cog(17, 20, 14, 10, 8)}M22 20A5 5 0 1 0 12 20A5 5 0 1 0 22 20Z`} fill="#b9b9b9" stroke="#aaa" />
              </Glyph>
            </PanelGear>
          </PanelTabs>
          <PanelBody>
            <PageButtons>
              <PageButton aria-label="Viewport properties" $active><Glyph width={48} height={48}><CameraArt /></Glyph></PageButton>
              <PageButton aria-label="Frame properties"><Glyph width={48} height={48}><FrameArt /></Glyph></PageButton>
            </PageButtons>
            <Sheet>
              {sections.map((s) => (
                <React.Fragment key={s.title}>
                  <Heading>{s.title}</Heading>
                  {s.fields.map((f) => {
                    const id = `${s.title}-${f.label}`.replace(/\W+/g, "-").toLowerCase();
                    return (
                      <Row key={id}>
                        <Gutter />
                        <Label htmlFor={id} $dim={f.kind === "dim"}>{f.label}</Label>
                        <Editor id={id} field={f} />
                      </Row>
                    );
                  })}
                </React.Fragment>
              ))}
            </Sheet>
          </PanelBody>
        </Panel>
      </Main>
    </Shell>
  );
}
